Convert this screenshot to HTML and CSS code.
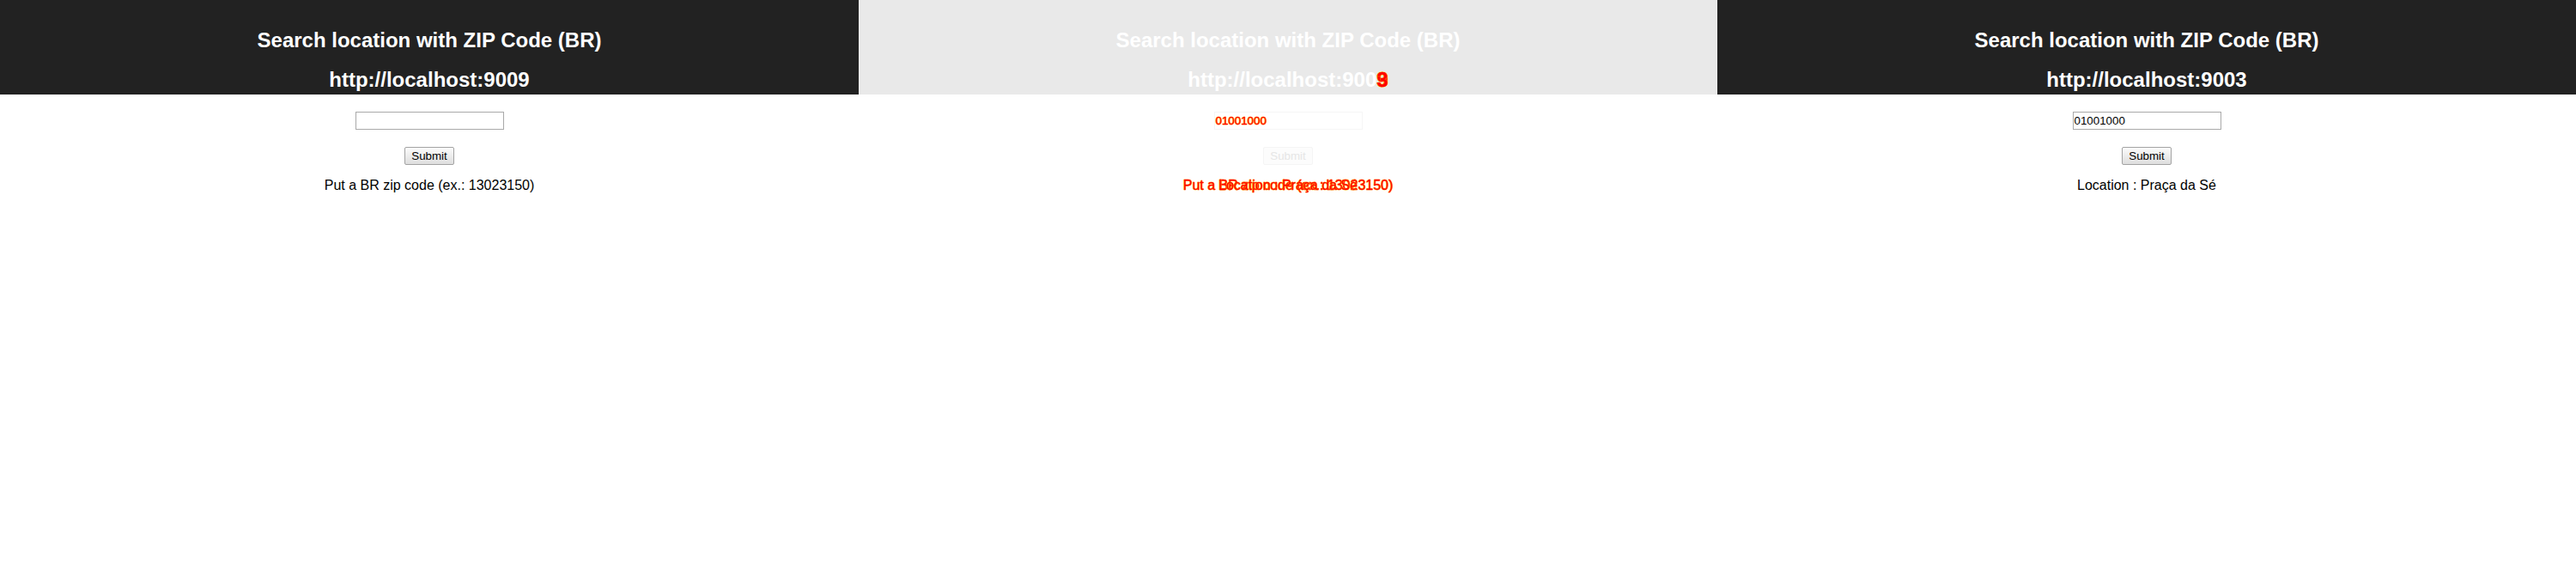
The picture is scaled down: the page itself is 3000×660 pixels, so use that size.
FILE: index.html
```html
<!DOCTYPE html>
<html lang="en">
<head>
<meta charset="utf-8">
<title>Search location with ZIP Code (BR)</title>
<link rel="stylesheet" href="styles.css">
</head>
<body>
<div class="panels">
  <section class="panel">
    <header class="bar dark">
      <h2 class="title">Search location with ZIP Code (BR)</h2>
      <h2 class="title">http://localhost:9009</h2>
    </header>
    <div class="form">
      <div class="zip"></div>
      <div class="btn">Submit</div>
      <p class="msg">Put a BR zip code (ex.: 13023150)</p>
    </div>
  </section>

  <section class="panel">
    <header class="bar faded">
      <h2 class="title">Search location with ZIP Code (BR)</h2>
      <h2 class="title">http://localhost:900<span class="stack"><span class="diff">9</span><span class="diff over">3</span></span></h2>
    </header>
    <div class="form">
      <div class="zip zip-faded"><span class="diff">01001000</span></div>
      <div class="btn btn-faded">Submit</div>
      <p class="msg"><span class="stack"><span class="diff">Put a BR zip code (ex.: 13023150)</span><span class="diff over center">Location : Praça da Sé</span></span></p>
    </div>
  </section>

  <section class="panel">
    <header class="bar dark">
      <h2 class="title">Search location with ZIP Code (BR)</h2>
      <h2 class="title">http://localhost:9003</h2>
    </header>
    <div class="form">
      <div class="zip">01001000</div>
      <div class="btn">Submit</div>
      <p class="msg"><span class="clip">Location : Praça da Sé</span></p>
    </div>
  </section>
</div>
</body>
</html>
```

FILE: styles.css
```css
html, body {
  margin: 0;
  padding: 0;
  background: #ffffff;
}

body {
  font-family: "Liberation Sans", Arial, sans-serif;
  color: #000000;
  width: 3000px;
  height: 660px;
  overflow: hidden;
}

.panels {
  display: grid;
  grid-template-columns: repeat(3, 1000px);
}

.panel {
  display: flex;
  flex-direction: column;
}

.bar {
  height: 110px;
  box-sizing: border-box;
  padding-top: 33px;
  display: flex;
  flex-direction: column;
  align-items: center;
  gap: 18px;
}

.bar.dark {
  background: #222222;
}

.bar.faded {
  background: #e9e9e9;
}

.title {
  margin: 0;
  font-size: 24px;
  font-weight: bold;
  line-height: 27.6px;
  color: #ffffff;
  white-space: nowrap;
}

.form {
  display: flex;
  flex-direction: column;
  align-items: center;
  padding-top: 20px;
}

.zip {
  width: 173px;
  height: 21px;
  box-sizing: border-box;
  border: 1px solid #a9a9a9;
  padding: 0 1px;
  font-size: 13.33px;
  line-height: 19px;
  text-align: left;
  background: #ffffff;
}

.zip-faded {
  border-color: #f6f6f6;
}

.btn {
  margin-top: 20px;
  width: 58px;
  height: 21px;
  box-sizing: border-box;
  border: 1px solid #a3a3a3;
  border-radius: 2px;
  background: linear-gradient(#fbfbfb, #dedede);
  font-size: 13.33px;
  line-height: 19px;
  text-align: center;
}

.btn-faded {
  border-color: #f5f5f5;
  background: #fcfcfc;
  color: #e6e6e6;
}

.msg {
  margin: 15px 0 0;
  font-size: 16px;
  line-height: 18.4px;
  white-space: nowrap;
}

.clip {
  display: inline-block;
  width: 162px;
  overflow: hidden;
  vertical-align: top;
}

.stack {
  position: relative;
  display: inline-block;
}

.diff {
  color: #ff0000;
  -webkit-text-stroke: 0.4px #ff0000;
  text-shadow: 0 0 1px #ffff00, 0 0 1px #ffff00;
}

.over {
  position: absolute;
  left: 0;
  top: 0;
}

.over.center {
  left: 50%;
  transform: translateX(-50%);
}
```
